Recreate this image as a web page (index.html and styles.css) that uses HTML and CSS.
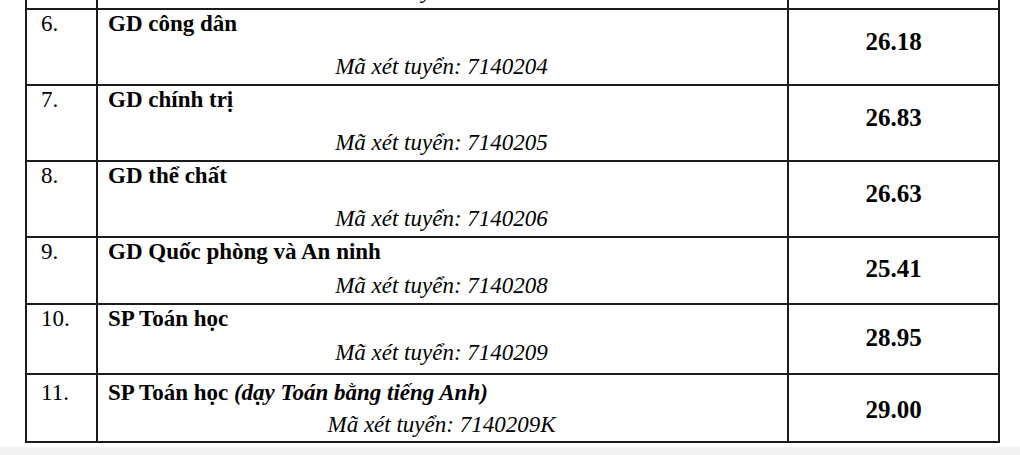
FILE: index.html
```html
<!DOCTYPE html>
<html lang="vi">
<head>
<meta charset="utf-8">
<title>Điểm chuẩn</title>
<link rel="stylesheet" href="styles.css">
</head>
<body>
<div class="page">
  <table class="scores">
    <colgroup>
      <col class="c-no">
      <col class="c-name">
      <col class="c-score">
    </colgroup>
    <tbody>
      <tr class="tall">
        <td class="no">5.</td>
        <td class="major"><div class="name">GD Đặc biệt</div><div class="code">Mã xét tuyển: 7140203</div></td>
        <td class="score"></td>
      </tr>
      <tr class="tall">
        <td class="no">6.</td>
        <td class="major"><div class="name">GD công dân</div><div class="code">Mã xét tuyển: 7140204</div></td>
        <td class="score">26.18</td>
      </tr>
      <tr class="tall">
        <td class="no">7.</td>
        <td class="major"><div class="name">GD chính trị</div><div class="code">Mã xét tuyển: 7140205</div></td>
        <td class="score">26.83</td>
      </tr>
      <tr class="tall">
        <td class="no">8.</td>
        <td class="major"><div class="name">GD thể chất</div><div class="code">Mã xét tuyển: 7140206</div></td>
        <td class="score">26.63</td>
      </tr>
      <tr class="compact">
        <td class="no">9.</td>
        <td class="major"><div class="name">GD Quốc phòng và An ninh</div><div class="code">Mã xét tuyển: 7140208</div></td>
        <td class="score">25.41</td>
      </tr>
      <tr class="compact loose">
        <td class="no">10.</td>
        <td class="major"><div class="name">SP Toán học</div><div class="code">Mã xét tuyển: 7140209</div></td>
        <td class="score">28.95</td>
      </tr>
      <tr class="dense">
        <td class="no">11.</td>
        <td class="major"><div class="name">SP Toán học <em>(dạy Toán bằng tiếng Anh)</em></div><div class="code">Mã xét tuyển: 7140209K</div></td>
        <td class="score">29.00</td>
      </tr>
    </tbody>
  </table>
</div>
<div class="footer"></div>
</body>
</html>
```
FILE: styles.css
```css
html, body {
  margin: 0;
  padding: 0;
  background: #ffffff;
}

body {
  font-family: "Liberation Serif", "Times New Roman", serif;
  color: #000;
  font-size: 23px;
}

.page {
  height: 447px;
  overflow: hidden;
  padding-left: 25px;
}

.scores {
  border-collapse: collapse;
  table-layout: fixed;
  width: 975px;
  margin-top: -68px;
}

.c-no { width: 71px; }
.c-name { width: 691px; }
.c-score { width: 211px; }

.scores td {
  border: 2px solid #1c1c1c;
  padding: 0;
  vertical-align: top;
  line-height: 26px;
}

.scores .no {
  padding-left: 14px;
}

.scores .major {
  padding-left: 10px;
}

.name {
  font-weight: bold;
}

.name em {
  font-style: italic;
}

.code {
  font-style: italic;
  text-align: center;
  padding-right: 12px;
}

.scores .score {
  font-weight: bold;
  font-size: 25px;
  line-height: 28px;
  text-align: center;
}

/* rows 5–8: name on top, code low in the cell */
.tall .no,
.tall .major {
  padding-top: 1px;
  padding-bottom: 4px;
}

.tall .code {
  margin-top: 17px;
}

.tall .score {
  padding-top: 18px;
}

/* rows 9–10 */
.compact .no,
.compact .major {
  padding-top: 1px;
  padding-bottom: 4px;
}

.compact .code {
  margin-top: 8px;
}

.compact .score {
  padding-top: 17px;
}

.compact.loose .no,
.compact.loose .major {
  padding-bottom: 7px;
}

.compact.loose .score {
  padding-top: 19px;
}

/* row 11 */
.dense .no,
.dense .major {
  padding-top: 5px;
  padding-bottom: 3px;
}

.dense .code {
  margin-top: 6px;
}

.dense .score {
  padding-top: 21px;
}

.footer {
  height: 8px;
  background: #f3f3f3;
}
```
